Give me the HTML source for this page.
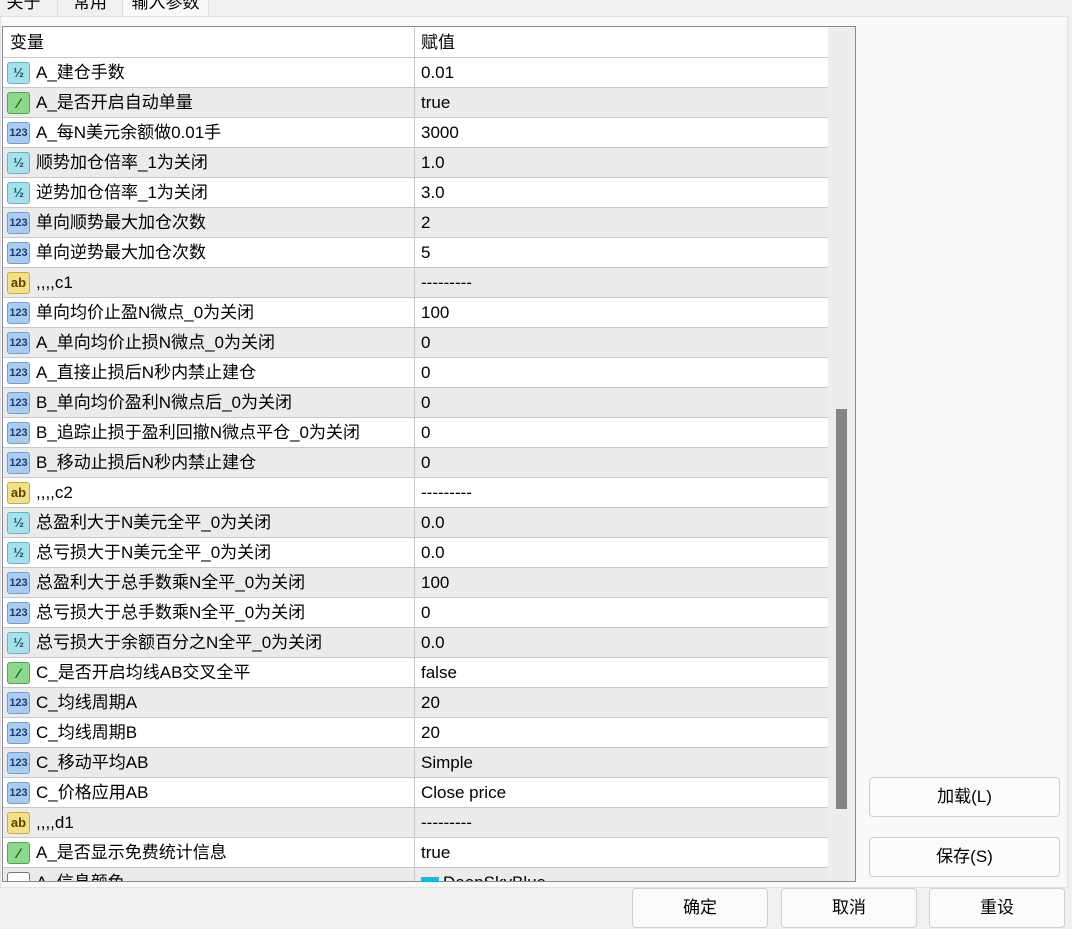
<!DOCTYPE html>
<html><head><meta charset="utf-8"><style>
*{margin:0;padding:0;box-sizing:border-box}
body{width:1072px;height:929px;background:#f0f0f0;position:relative;overflow:hidden;font-family:"Liberation Sans","Noto Sans CJK SC",sans-serif;font-size:17px;color:#000}
.tab{position:absolute;top:-6px;height:22px;line-height:18px;font-size:17px;text-align:center;border-right:1px solid #ddd;background:#f0f0f0;overflow:hidden}
.panel{position:absolute;left:0;top:16px;width:1068px;height:872px;background:#f9f9f9;border:1px solid #e2e2e2}
.list{position:absolute;left:2px;top:26px;width:854px;height:856px;border:1px solid #8a8a96;background:#fff;overflow:hidden}
.row{position:absolute;left:0;width:825px;height:30px;border-bottom:1px solid #c8c8c8}
.row.g{background:#ebebeb}
.row .n{position:absolute;left:33px;top:0;height:29px;line-height:29px;white-space:nowrap}
.row .v{position:absolute;left:411px;top:0;height:30px;border-left:1px solid #c8c8c8;padding-left:6px;line-height:29px;width:414px;white-space:nowrap}
.ic{position:absolute;left:4px;top:4px;width:23px;height:22px;border-radius:3px;font-size:11px;font-weight:bold;text-align:center;line-height:20px}
.b{background:#a9cdf0;border:1px solid #6f9fd0;color:#1e3c6e}
.h{background:#a6e0ea;border:1px solid #5fb6c8;color:#1d5a6a;font-size:13px}
.gr{background:#8ed88e;border:1px solid #4aa84a;color:#135213;font-size:14px}
.y{background:#f3e08a;border:1px solid #c9ad3c;color:#5a4400;font-size:13px}
.w{background:#fff;border:1px solid #777}
.sb{position:absolute;left:825px;top:0;width:27px;height:856px;background:#ededed}
.th{position:absolute;left:833px;top:382px;width:11px;height:400px;background:#858585}
.btn{position:absolute;height:40px;background:#fbfbfb;border:1px solid #cfcfcf;border-radius:4px;text-align:center;line-height:38px;font-size:17px}
</style></head><body>
<div class="tab" style="left:-10px;width:68px">关于</div>
<div class="tab" style="left:58px;width:65px">常用</div>
<div class="tab" style="left:123px;width:86px;background:#f9f9f9;height:23px">输入参数</div>
<div class="panel"></div>
<div class="list">
<div class="row" style="top:0;height:31px"><span class="n" style="left:7px;line-height:31px;height:31px">变量</span><span class="v" style="line-height:31px;height:31px">赋值</span></div>
<div class="row" style="top:31px"><div class="ic h">½</div><span class="n">A_建仓手数</span><span class="v">0.01</span></div>
<div class="row g" style="top:61px"><div class="ic gr">⁄</div><span class="n">A_是否开启自动单量</span><span class="v">true</span></div>
<div class="row" style="top:91px"><div class="ic b">123</div><span class="n">A_每N美元余额做0.01手</span><span class="v">3000</span></div>
<div class="row g" style="top:121px"><div class="ic h">½</div><span class="n">顺势加仓倍率_1为关闭</span><span class="v">1.0</span></div>
<div class="row" style="top:151px"><div class="ic h">½</div><span class="n">逆势加仓倍率_1为关闭</span><span class="v">3.0</span></div>
<div class="row g" style="top:181px"><div class="ic b">123</div><span class="n">单向顺势最大加仓次数</span><span class="v">2</span></div>
<div class="row" style="top:211px"><div class="ic b">123</div><span class="n">单向逆势最大加仓次数</span><span class="v">5</span></div>
<div class="row g" style="top:241px"><div class="ic y">ab</div><span class="n">,,,,c1</span><span class="v">---------</span></div>
<div class="row" style="top:271px"><div class="ic b">123</div><span class="n">单向均价止盈N微点_0为关闭</span><span class="v">100</span></div>
<div class="row g" style="top:301px"><div class="ic b">123</div><span class="n">A_单向均价止损N微点_0为关闭</span><span class="v">0</span></div>
<div class="row" style="top:331px"><div class="ic b">123</div><span class="n">A_直接止损后N秒内禁止建仓</span><span class="v">0</span></div>
<div class="row g" style="top:361px"><div class="ic b">123</div><span class="n">B_单向均价盈利N微点后_0为关闭</span><span class="v">0</span></div>
<div class="row" style="top:391px"><div class="ic b">123</div><span class="n">B_追踪止损于盈利回撤N微点平仓_0为关闭</span><span class="v">0</span></div>
<div class="row g" style="top:421px"><div class="ic b">123</div><span class="n">B_移动止损后N秒内禁止建仓</span><span class="v">0</span></div>
<div class="row" style="top:451px"><div class="ic y">ab</div><span class="n">,,,,c2</span><span class="v">---------</span></div>
<div class="row g" style="top:481px"><div class="ic h">½</div><span class="n">总盈利大于N美元全平_0为关闭</span><span class="v">0.0</span></div>
<div class="row" style="top:511px"><div class="ic h">½</div><span class="n">总亏损大于N美元全平_0为关闭</span><span class="v">0.0</span></div>
<div class="row g" style="top:541px"><div class="ic b">123</div><span class="n">总盈利大于总手数乘N全平_0为关闭</span><span class="v">100</span></div>
<div class="row" style="top:571px"><div class="ic b">123</div><span class="n">总亏损大于总手数乘N全平_0为关闭</span><span class="v">0</span></div>
<div class="row g" style="top:601px"><div class="ic h">½</div><span class="n">总亏损大于余额百分之N全平_0为关闭</span><span class="v">0.0</span></div>
<div class="row" style="top:631px"><div class="ic gr">⁄</div><span class="n">C_是否开启均线AB交叉全平</span><span class="v">false</span></div>
<div class="row g" style="top:661px"><div class="ic b">123</div><span class="n">C_均线周期A</span><span class="v">20</span></div>
<div class="row" style="top:691px"><div class="ic b">123</div><span class="n">C_均线周期B</span><span class="v">20</span></div>
<div class="row g" style="top:721px"><div class="ic b">123</div><span class="n">C_移动平均AB</span><span class="v">Simple</span></div>
<div class="row" style="top:751px"><div class="ic b">123</div><span class="n">C_价格应用AB</span><span class="v">Close price</span></div>
<div class="row g" style="top:781px"><div class="ic y">ab</div><span class="n">,,,,d1</span><span class="v">---------</span></div>
<div class="row" style="top:811px"><div class="ic gr">⁄</div><span class="n">A_是否显示免费统计信息</span><span class="v">true</span></div>
<div class="row g" style="top:841px"><div class="ic w"></div><span class="n">A_信息颜色</span><span class="v"><span style="display:inline-block;width:18px;height:14px;background:#00bfff;vertical-align:middle;margin-right:4px"></span>DeepSkyBlue</span></div>
<div class="sb"></div><div class="th"></div>
</div>
<div class="btn" style="left:869px;top:777px;width:191px">加载(L)</div>
<div class="btn" style="left:869px;top:837px;width:191px">保存(S)</div>
<div class="btn" style="left:632px;top:888px;width:136px">确定</div>
<div class="btn" style="left:781px;top:888px;width:136px">取消</div>
<div class="btn" style="left:929px;top:888px;width:136px">重设</div>
</body></html>
